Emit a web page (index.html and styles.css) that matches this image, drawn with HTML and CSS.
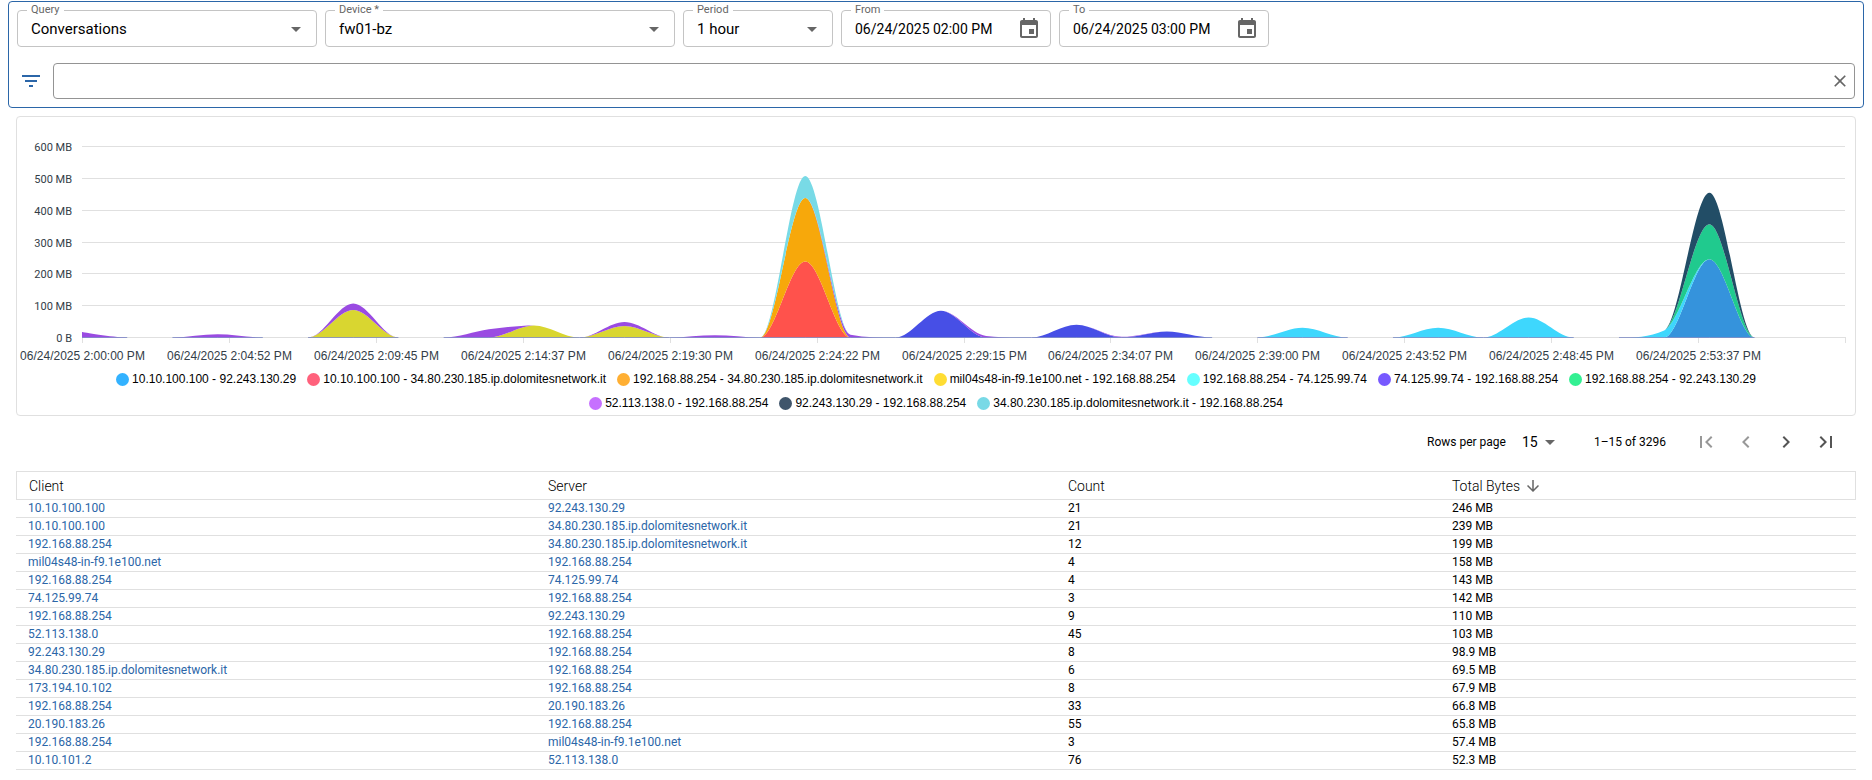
FILE: index.html
```html
<!DOCTYPE html>
<html lang="en">
<head>
<meta charset="utf-8">
<meta name="viewport" content="width=device-width, initial-scale=1">
<title>Conversations</title>
<link rel="stylesheet" href="styles.css">
</head>
<body>
<form class="filters">
  <div class="filters-row">
    <div class="field field-query">
      <label for="query">Query</label>
      <select id="query"><option>Conversations</option></select>
      <svg class="caret" viewBox="0 0 24 24" aria-hidden="true"><path d="M7 10l5 5 5-5z"/></svg>
    </div>
    <div class="field field-device">
      <label for="device">Device *</label>
      <select id="device"><option>fw01-bz</option></select>
      <svg class="caret" viewBox="0 0 24 24" aria-hidden="true"><path d="M7 10l5 5 5-5z"/></svg>
    </div>
    <div class="field field-period">
      <label for="period">Period</label>
      <select id="period"><option>1 hour</option></select>
      <svg class="caret" viewBox="0 0 24 24" aria-hidden="true"><path d="M7 10l5 5 5-5z"/></svg>
    </div>
    <div class="field field-date">
      <label for="from">From</label>
      <input id="from" type="text" value="06/24/2025 02:00 PM">
      <button type="button" class="date-button" aria-label="Choose start date"><svg viewBox="0 0 24 24"><path d="M17 12h-5v5h5v-5zM16 1v2H8V1H6v2H5c-1.110 0-1.990.9-1.990 2L3 19c0 1.100.89 2 2 2h14c1.100 0 2-.9 2-2V5c0-1.100-.9-2-2-2h-1V1h-2zm3 18H5V8h14v11z"/></svg></button>
    </div>
    <div class="field field-date">
      <label for="to">To</label>
      <input id="to" type="text" value="06/24/2025 03:00 PM">
      <button type="button" class="date-button" aria-label="Choose end date"><svg viewBox="0 0 24 24"><path d="M17 12h-5v5h5v-5zM16 1v2H8V1H6v2H5c-1.110 0-1.990.9-1.990 2L3 19c0 1.100.89 2 2 2h14c1.100 0 2-.9 2-2V5c0-1.100-.9-2-2-2h-1V1h-2zm3 18H5V8h14v11z"/></svg></button>
    </div>
  </div>
  <div class="search-row">
    <svg class="filter-icon" viewBox="0 0 24 24" aria-hidden="true"><path d="M10 18h4v-2h-4v2zM3 6v2h18V6H3zm3 7h12v-2H6v2z"/></svg>
    <div class="search">
      <input type="text" aria-label="Filter">
      <button type="button" aria-label="Clear filter"><svg viewBox="0 0 24 24"><path d="M19 6.410L17.590 5 12 10.590 6.410 5 5 6.410 10.590 12 5 17.590 6.410 19 12 13.410 17.590 19 19 17.590 13.410 12z"/></svg></button>
    </div>
  </div>
</form>

<main class="content">
  <section class="chart-card">
    <svg id="chart" class="chart" role="img" aria-label="Traffic per conversation"></svg>
    <ul class="legend">
      <li><i class="dot c1"></i>10.10.100.100 - 92.243.130.29</li>
      <li><i class="dot c2"></i>10.10.100.100 - 34.80.230.185.ip.dolomitesnetwork.it</li>
      <li><i class="dot c3"></i>192.168.88.254 - 34.80.230.185.ip.dolomitesnetwork.it</li>
      <li><i class="dot c4"></i>mil04s48-in-f9.1e100.net - 192.168.88.254</li>
      <li><i class="dot c5"></i>192.168.88.254 - 74.125.99.74</li>
      <li><i class="dot c6"></i>74.125.99.74 - 192.168.88.254</li>
      <li><i class="dot c7"></i>192.168.88.254 - 92.243.130.29</li>
      <li><i class="dot c8"></i>52.113.138.0 - 192.168.88.254</li>
      <li><i class="dot c9"></i>92.243.130.29 - 192.168.88.254</li>
      <li><i class="dot c10"></i>34.80.230.185.ip.dolomitesnetwork.it - 192.168.88.254</li>
    </ul>
  </section>

  <nav class="pagination" aria-label="Pagination">
    <label for="rows">Rows per page</label>
    <div class="rows-select">
      <select id="rows"><option>15</option></select>
      <svg class="caret" viewBox="0 0 24 24" aria-hidden="true"><path d="M7 10l5 5 5-5z"/></svg>
    </div>
    <span class="range">1–15 of 3296</span>
    <div class="pages">
      <button type="button" disabled aria-label="First page"><svg viewBox="0 0 24 24"><path d="M18.410 16.590L13.820 12l4.590-4.590L17 6l-6 6 6 6zM6 6h2v12H6z"/></svg></button>
      <button type="button" disabled aria-label="Previous page"><svg viewBox="0 0 24 24"><path d="M15.410 7.410L14 6l-6 6 6 6 1.410-1.410L10.830 12z"/></svg></button>
      <button type="button" aria-label="Next page"><svg viewBox="0 0 24 24"><path d="M10 6L8.590 7.410 13.170 12l-4.580 4.590L10 18l6-6z"/></svg></button>
      <button type="button" aria-label="Last page"><svg viewBox="0 0 24 24"><path d="M5.590 7.410L10.180 12l-4.590 4.590L7 18l6-6-6-6zM16 6h2v12h-2z"/></svg></button>
    </div>
  </nav>

  <table class="data">
    <colgroup><col class="col-host"><col class="col-host"><col class="col-count"><col></colgroup>
    <thead>
      <tr><th>Client</th><th>Server</th><th>Count</th><th><span class="sorted">Total Bytes<svg viewBox="0 0 24 24" aria-hidden="true"><path d="M20 12l-1.410-1.410L13 16.170V4h-2v12.170l-5.580-5.590L4 12l8 8 8-8z"/></svg></span></th></tr>
    </thead>
    <tbody>
      <tr><td><a href="#">10.10.100.100</a></td><td><a href="#">92.243.130.29</a></td><td>21</td><td>246 MB</td></tr>
      <tr><td><a href="#">10.10.100.100</a></td><td><a href="#">34.80.230.185.ip.dolomitesnetwork.it</a></td><td>21</td><td>239 MB</td></tr>
      <tr><td><a href="#">192.168.88.254</a></td><td><a href="#">34.80.230.185.ip.dolomitesnetwork.it</a></td><td>12</td><td>199 MB</td></tr>
      <tr><td><a href="#">mil04s48-in-f9.1e100.net</a></td><td><a href="#">192.168.88.254</a></td><td>4</td><td>158 MB</td></tr>
      <tr><td><a href="#">192.168.88.254</a></td><td><a href="#">74.125.99.74</a></td><td>4</td><td>143 MB</td></tr>
      <tr><td><a href="#">74.125.99.74</a></td><td><a href="#">192.168.88.254</a></td><td>3</td><td>142 MB</td></tr>
      <tr><td><a href="#">192.168.88.254</a></td><td><a href="#">92.243.130.29</a></td><td>9</td><td>110 MB</td></tr>
      <tr><td><a href="#">52.113.138.0</a></td><td><a href="#">192.168.88.254</a></td><td>45</td><td>103 MB</td></tr>
      <tr><td><a href="#">92.243.130.29</a></td><td><a href="#">192.168.88.254</a></td><td>8</td><td>98.9 MB</td></tr>
      <tr><td><a href="#">34.80.230.185.ip.dolomitesnetwork.it</a></td><td><a href="#">192.168.88.254</a></td><td>6</td><td>69.5 MB</td></tr>
      <tr><td><a href="#">173.194.10.102</a></td><td><a href="#">192.168.88.254</a></td><td>8</td><td>67.9 MB</td></tr>
      <tr><td><a href="#">192.168.88.254</a></td><td><a href="#">20.190.183.26</a></td><td>33</td><td>66.8 MB</td></tr>
      <tr><td><a href="#">20.190.183.26</a></td><td><a href="#">192.168.88.254</a></td><td>55</td><td>65.8 MB</td></tr>
      <tr><td><a href="#">192.168.88.254</a></td><td><a href="#">mil04s48-in-f9.1e100.net</a></td><td>3</td><td>57.4 MB</td></tr>
      <tr><td><a href="#">10.10.101.2</a></td><td><a href="#">52.113.138.0</a></td><td>76</td><td>52.3 MB</td></tr>
    </tbody>
  </table>
</main>
<script src="chart.js"></script>
</body>
</html>
```
FILE: styles.css
```css
* { box-sizing: border-box; }

body {
  margin: 0;
  padding: 1px 8px 8px;
  background: #fff;
  color: #000;
  font-family: Roboto, "Liberation Sans", sans-serif;
  font-size: 12px;
}

input, select, button {
  margin: 0;
  padding: 0;
  border: 0;
  background: none;
  color: inherit;
  font-family: inherit;
  appearance: none;
}

button { cursor: pointer; }
svg { display: block; }

.filters {
  display: flex;
  flex-direction: column;
  gap: 16px;
  padding: 8px;
  border: 1px solid #2b66a8;
  border-radius: 4px;
}

.filters-row { display: flex; gap: 8px; }

.field {
  position: relative;
  display: flex;
  align-items: center;
  height: 37px;
  border: 1px solid #c4c4c4;
  border-radius: 4px;
  color: #000;
}

.field label {
  position: absolute;
  top: -8px;
  left: 9px;
  padding: 0 4px;
  background: #fff;
  color: #666;
  font-size: 11px;
  line-height: 13px;
}

.field select, .field input {
  width: 100%;
  height: 35px;
  padding: 0 13px;
  font-size: 15px;
}

.field input { font-size: 14px; }

.field-query { width: 300px; }
.field-device { width: 350px; }
.field-period { width: 150px; }
.field-date { width: 210px; }

.caret {
  position: absolute;
  right: 8px;
  width: 24px;
  height: 24px;
  fill: #666;
  pointer-events: none;
}

.date-button {
  position: absolute;
  right: 9px;
}

.date-button svg { width: 24px; height: 24px; fill: #666; }

.search-row { display: flex; align-items: center; gap: 10px; }

.filter-icon {
  flex: none;
  width: 24px;
  height: 24px;
  margin-left: 2px;
  fill: #2b66a8;
}

.search {
  display: flex;
  align-items: center;
  flex: 1;
  height: 36px;
  padding: 0 4px 0 14px;
  border: 1px solid #949494;
  border-radius: 4px;
}

.search input { flex: 1; height: 34px; font-size: 14px; outline: 0; }
.search button svg { width: 20px; height: 20px; fill: #666; }

.content { padding: 8px 8px 0; }

.chart-card {
  border: 1px solid #e0e0e0;
  border-radius: 4px;
}

.chart { width: 100%; height: 250px; }
.chart text { fill: #333d47; font-family: "Liberation Sans", Arial, sans-serif; font-size: 12px; }
.chart .y-label { font-family: Roboto, sans-serif; font-size: 11px; }
.chart .grid { stroke: #e0e0e0; stroke-width: 1; }

.legend {
  display: flex;
  flex-wrap: wrap;
  justify-content: center;
  column-gap: 11px;
  margin: 0;
  padding: 0 16px;
  list-style: none;
  font-family: "Liberation Sans", Arial, sans-serif;
  line-height: 24px;
}

.legend li { display: flex; align-items: center; gap: 3px; white-space: nowrap; }
.dot { width: 13px; height: 13px; border-radius: 50%; }
.c1 { background: #33b2ff; }
.c2 { background: #ff617c; }
.c3 { background: #ffaf33; }
.c4 { background: #ffdd33; }
.c5 { background: #66ffff; }
.c6 { background: #7759ff; }
.c7 { background: #33f092; }
.c8 { background: #c670ff; }
.c9 { background: #3f556b; }
.c10 { background: #78d9e6; }

.pagination {
  display: flex;
  align-items: center;
  justify-content: flex-end;
  height: 55px;
  padding: 0 10px 3px 0;
}

.rows-select {
  position: relative;
  display: flex;
  align-items: center;
  width: 48px;
  margin: 0 32px 0 8px;
}

.rows-select select { width: 100%; height: 24px; padding-left: 8px; font-size: 14px; }
.rows-select .caret { right: 0; }
.range { margin-right: 20px; }
.pages { display: flex; }
.pages button { padding: 8px; }
.pages button:disabled { opacity: 0.6; }
.pages svg { width: 24px; height: 24px; fill: #555; }

.data {
  width: 100%;
  border-collapse: separate;
  border-spacing: 0;
  table-layout: fixed;
}

.col-host { width: 28.26%; }
.col-count { width: 20.87%; }

.data th {
  height: 29px;
  padding: 0 12px;
  border: 1px solid #e0e0e0;
  border-width: 1px 0;
  font-size: 14px;
  font-weight: 300;
  line-height: 24px;
  text-align: left;
}

.data th:first-child { border-left-width: 1px; }
.data th:last-child { border-right-width: 1px; }

.data td {
  padding: 0 12px;
  border-bottom: 1px solid #e0e0e0;
  line-height: 17px;
}

.data a { color: #2b66a8; text-decoration: none; }

.sorted { display: flex; align-items: center; gap: 4px; }
.sorted svg { width: 18px; height: 18px; fill: #666; }
```
FILE: chart.js
```js
(function () {
  var NS = 'http://www.w3.org/2000/svg';
  var svg = document.getElementById('chart');
  var INTERVALS = 39;
  var MAX = 600;

  var labels = ['2:00:00', '2:04:52', '2:09:45', '2:14:37', '2:19:30', '2:24:22',
    '2:29:15', '2:34:07', '2:39:00', '2:43:52', '2:48:45', '2:53:37'];

  // Megabytes by sample index, in stacking order.
  var series = [
    { color: '#3593dc', data: { 36: 246 } },
    { color: '#ff524c', data: { 16: 239 } },
    { color: '#f7a80b', data: { 16: 199 } },
    { color: '#d9d630', data: { 6: 86, 10: 38, 12: 36 } },
    { color: '#3ed7fd', data: { 27: 31, 30: 31, 32: 63, 35: 22 } },
    { color: '#474fe6', data: { 19: 84, 22: 40, 24: 19 } },
    { color: '#20ca8e', data: { 36: 110 } },
    { color: '#9a4be2', data: { 0: 17, 3: 10, 6: 21, 9: 26, 12: 13, 14: 7, 17: 9, 20: 5, 23: 2 } },
    { color: '#224d66', data: { 36: 99 } },
    { color: '#78dae6', data: { 16: 69 } }
  ];

  function add(name, attrs, text) {
    var el = document.createElementNS(NS, name);
    Object.keys(attrs).forEach(function (k) { el.setAttribute(k, attrs[k]); });
    if (text) el.textContent = text;
    svg.appendChild(el);
  }

  function clamp(v, a, b) {
    return Math.max(Math.min(a, b), Math.min(Math.max(a, b), v));
  }

  // Cubic segments through evenly spaced points, monotone between neighbours.
  function curve(pts) {
    var cps = pts.map(function (p, i) {
      var a = pts[i - 1], b = pts[i + 1];
      if (!a || !b) return { p: p, n: p };
      var dx = (b[0] - a[0]) / 6;
      var dy = clamp(p[1] + (b[1] - a[1]) / 6, b[1], p[1]) - p[1];
      dy = p[1] - clamp(p[1] - dy, a[1], p[1]);
      return { p: [p[0] - dx, p[1] - dy], n: [p[0] + dx, p[1] + dy] };
    });
    return pts.slice(1).map(function (p, i) {
      return [pts[i], cps[i].n, cps[i + 1].p, p];
    });
  }

  function fmt(p) { return p[0].toFixed(2) + ' ' + p[1].toFixed(2); }

  // One closed outline per run of consecutive segments.
  function area(color, above, below) {
    var d = 'M' + fmt(above[0][0]);
    above.forEach(function (s) { d += 'C' + fmt(s[1]) + ' ' + fmt(s[2]) + ' ' + fmt(s[3]); });
    below = below.slice().reverse();
    d += 'L' + fmt(below[0][3]);
    below.forEach(function (s) { d += 'C' + fmt(s[2]) + ' ' + fmt(s[1]) + ' ' + fmt(s[0]); });
    add('path', { fill: color, d: d + 'Z' });
  }

  function draw() {
    svg.textContent = '';
    var left = 65, right = svg.clientWidth - 10, top = 29, base = 220;
    var tick = (right - left) / 12;
    var step = (right - left) / INTERVALS;
    var i;

    for (i = 0; i <= 6; i++) {
      var y = Math.round(base - (base - top) * i / 6) + 0.5;
      add('line', { 'class': 'grid', x1: left, x2: right, y1: y, y2: y });
      add('text', { 'class': 'y-label', x: left - 10, y: y + 4, 'text-anchor': 'end' }, i ? i * 100 + ' MB' : '0 B');
    }
    for (i = 0; i <= 12; i++) {
      var x = Math.round(left + tick * i) + 0.5;
      add('line', { 'class': 'grid', x1: x, x2: x, y1: base, y2: base + 6 });
      if (labels[i]) add('text', { x: x, y: base + 23, 'text-anchor': 'middle' }, '06/24/2025 ' + labels[i] + ' PM');
    }

    var total = [];
    for (i = 0; i <= INTERVALS; i++) total.push(0);
    function line() {
      return curve(total.map(function (v, k) {
        return [left + step * k, base + 0.5 - v / MAX * (base - top)];
      }));
    }
    var below = line();
    series.forEach(function (s) {
      Object.keys(s.data).forEach(function (k) { total[k] += s.data[k]; });
      var above = line();
      var start = -1;
      for (var k = 0; k <= above.length; k++) {
        var filled = k < above.length && (s.data[k] || s.data[k + 1]);
        if (filled && start < 0) start = k;
        if (!filled && start >= 0) {
          area(s.color, above.slice(start, k), below.slice(start, k));
          start = -1;
        }
      }
      below = above;
    });
    below.forEach(function (seg, k) {
      if (!total[k] && !total[k + 1]) return;
      add('line', {
        x1: seg[0][0], x2: seg[3][0], y1: base + 0.5, y2: base + 0.5,
        stroke: '#6f7fc0', 'stroke-opacity': 0.7
      });
    });
  }

  draw();
  window.addEventListener('resize', draw);
})();
```
